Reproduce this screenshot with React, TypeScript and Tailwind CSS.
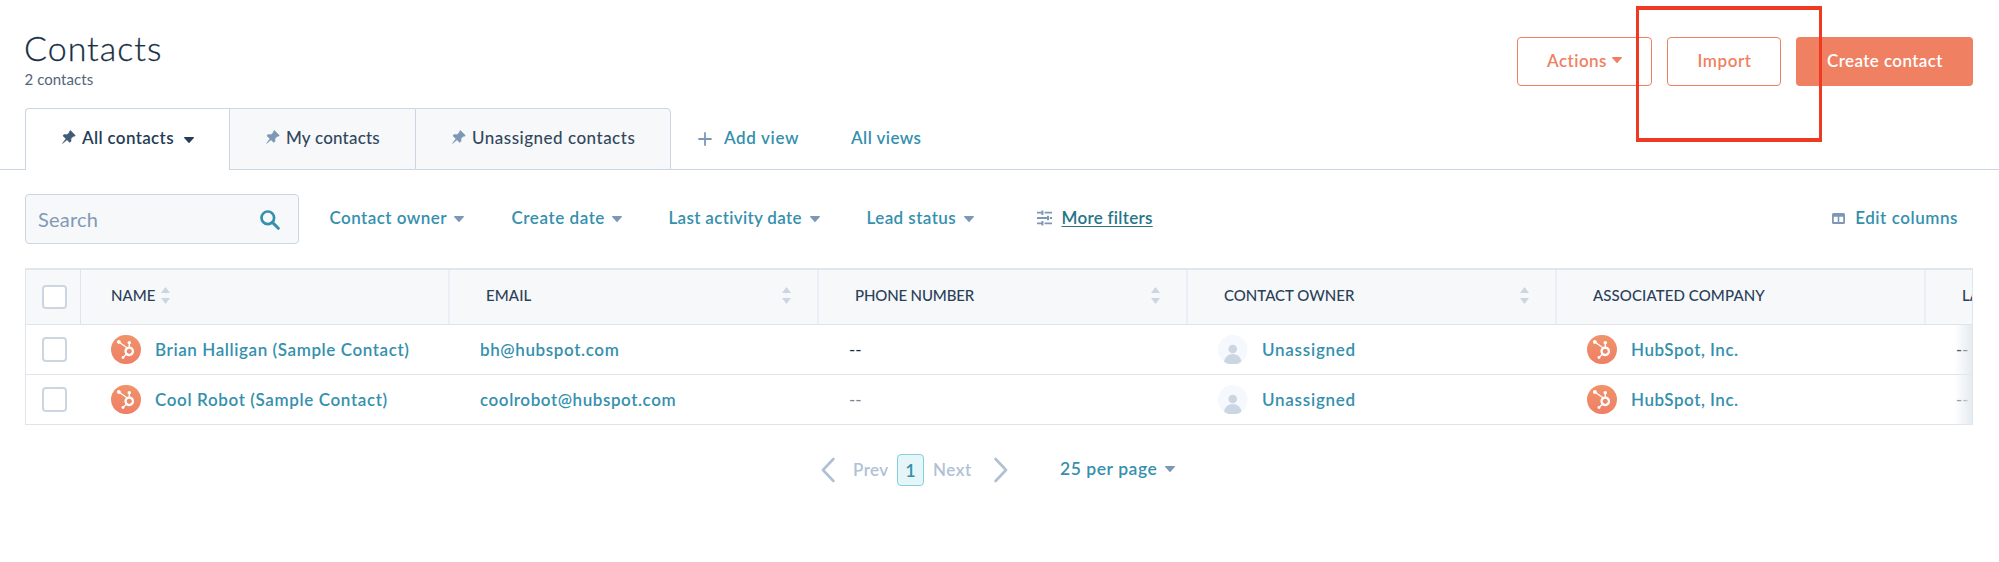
import type { ReactNode } from "react";
import { FaHubspot } from "react-icons/fa";

function Caret({ className = "" }: { className?: string }) {
  return (
    <svg viewBox="0 0 10 6" className={`h-[6px] w-[10px] shrink-0 ${className}`} fill="currentColor">
      <path d="M.6 0h8.8c.5 0 .7.5.4.9L5.5 5.7a.7.7 0 0 1-1 0L.2.9C-.1.5.1 0 .6 0z" />
    </svg>
  );
}

function PinIcon({ className = "" }: { className?: string }) {
  return (
    <svg viewBox="0 0 14 14" className={`mt-[-3px] mr-[6px] size-[14px] shrink-0 ${className}`} fill="currentColor" stroke="currentColor" strokeWidth=".6" strokeLinejoin="round">
      <path d="M8.4.5 13.3 5.4 12.3 6.3 11.3 6.2 8.9 8.7 9 11.2 7.8 12.4 5 9.7.6 13.4 4 8.7.9 5.7 2.2 4.6 5 4.7 7.6 2.3 7.4 1.4z" />
    </svg>
  );
}

function SortArrows({ className = "" }: { className?: string }) {
  return (
    <svg viewBox="0 0 9 17" className={`h-[17px] w-[9px] shrink-0 text-[#cbd6e2] ${className}`} fill="currentColor">
      <path d="M4.5 0 9 6H0zM4.5 17 9 11H0z" />
    </svg>
  );
}

function SearchIcon() {
  return (
    <svg viewBox="0 0 20 20" className="mb-[-1px] h-[20px] w-[20px] shrink-0 text-[#3590ae]" fill="none" stroke="currentColor">
      <circle cx="7.8" cy="7.8" r="6.3" strokeWidth="2.7" />
      <path d="m12.4 12.4 5.9 5.9" strokeWidth="3" strokeLinecap="round" />
    </svg>
  );
}

function SlidersIcon() {
  return (
    <svg viewBox="0 0 15 16" className="h-[16px] w-[15px] shrink-0 text-[#7c98b6]" stroke="currentColor" fill="none" strokeWidth="1.8">
      <path d="M0 2.7h5.4M7.6 2.7H15M0 8h10.8M12.8 8H15M0 13.3h5.4M7.6 13.3H15" />
      <path d="M5.4.4v4.6M11 5.7v4.6M5.4 11v4.6" strokeWidth="2" />
    </svg>
  );
}

function ColumnsIcon() {
  return (
    <svg viewBox="0 0 13 11" className="h-[11px] w-[13px] shrink-0 text-[#7c98b6]">
      <path
        fill="currentColor"
        fillRule="evenodd"
        d="M1.5 0h10A1.5 1.5 0 0 1 13 1.5v8A1.5 1.5 0 0 1 11.5 11h-10A1.5 1.5 0 0 1 0 9.5v-8A1.5 1.5 0 0 1 1.5 0zM1.8 3.7v5.2h3.900V3.7zM7.3 3.7v5.2h3.900V3.7z"
      />
    </svg>
  );
}

function LogoAvatar() {
  return (
    <span className="flex size-[29.5px] shrink-0 items-center justify-center rounded-full bg-linear-to-b from-[#f0936a] to-[#ef7f66] text-white">
      <FaHubspot className="size-[19px]" />
    </span>
  );
}

function PersonAvatar() {
  return (
    <svg viewBox="0 0 30 30" className="size-[29.5px] shrink-0">
      <circle cx="15" cy="15" r="15" fill="#f5f8fc" />
      <circle cx="15" cy="14.2" r="4.4" fill="#cbd6e2" />
      <path d="M6.2 27.1c.6-4.7 4.3-7.7 8.8-7.7s8.2 3 8.8 7.7A15 15 0 0 1 15 30a15 15 0 0 1-8.8-2.9z" fill="#cbd6e2" />
    </svg>
  );
}

function Checkbox() {
  return <span className="block size-[24.5px] shrink-0 rounded-[4px] border-2 border-[#cbd6e2] bg-white" />;
}

function Filter({ label, className }: { label: string; className: string }) {
  return (
    <div className={`flex shrink-0 items-center justify-between text-[#3590ae] ${className}`}>
      <span>{label}</span>
      <Caret className="mt-[2px] text-[#7c98b6]" />
    </div>
  );
}

function HeadCell({ children, className = "" }: { children: ReactNode; className?: string }) {
  return (
    <div className={`flex w-[369px] shrink-0 items-center border-l-2 border-[#eaeef5] pb-[4px] pl-[36px] ${className}`}>
      {children}
    </div>
  );
}

type Contact = {
  name: string;
  email: string;
  nameClass: string;
  emailClass: string;
  dashClass: string;
};

const contacts: Contact[] = [
  {
    name: "Brian Halligan (Sample Contact)",
    email: "bh@hubspot.com",
    nameClass: "tracking-[0.59px]",
    emailClass: "tracking-[0.62px]",
    dashClass: "text-[#1c2f45]",
  },
  {
    name: "Cool Robot (Sample Contact)",
    email: "coolrobot@hubspot.com",
    nameClass: "tracking-[0.63px]",
    emailClass: "tracking-[0.57px]",
    dashClass: "text-[#7b8591]",
  },
];

function Row({ contact }: { contact: Contact }) {
  return (
    <div className="flex h-[50px] items-center border-b border-[#dfe3eb] font-semibold text-[#3590ae]">
      <div className="w-[85px] shrink-0 pl-[16px]">
        <Checkbox />
      </div>
      <div className="flex w-[369px] shrink-0 items-center gap-[14.5px]">
        <LogoAvatar />
        <span className={contact.nameClass}>{contact.name}</span>
      </div>
      <span className={`w-[369px] shrink-0 ${contact.emailClass}`}>{contact.email}</span>
      <span className={`w-[369px] shrink-0 font-normal ${contact.dashClass}`}>--</span>
      <div className="flex w-[369px] shrink-0 items-center gap-[14.5px]">
        <PersonAvatar />
        <span className="tracking-[0.74px]">Unassigned</span>
      </div>
      <div className="flex w-[369px] shrink-0 items-center gap-[14.5px]">
        <LogoAvatar />
        <span className="tracking-[0.52px]">HubSpot, Inc.</span>
      </div>
      <span className={`shrink-0 font-normal ${contact.dashClass}`}>--</span>
    </div>
  );
}

export default function App() {
  return (
    <div className="relative flex h-[562px] w-[1999px] flex-col overflow-hidden bg-white font-['Lato',sans-serif] text-[17px] leading-[24px] font-medium whitespace-nowrap text-[#33475b]">
      <header className="flex h-[108px] shrink-0 items-start justify-between pr-[26px] pl-[24px]">
        <div className="pt-[28px]">
          <h1 className="text-[34px] leading-[40px] font-light tracking-[1px] text-[#15293f] [-webkit-text-stroke:0.3px_#2d4259]">
            Contacts
          </h1>
          <p className="mt-[1px] pl-[0.5px] text-[15px] leading-[20px] font-normal tracking-[0.05px] text-[#52657a]">2 contacts</p>
        </div>
        <div className="flex gap-[15px] pt-[37px] font-semibold text-[#f08062]">
          <button className="flex h-[49px] w-[135px] items-center justify-center gap-[5px] rounded-[4px] border border-[#f08062] pb-[2px]">
            <span className="tracking-[0.45px]">Actions</span>
            <Caret className="mb-[1px]" />
          </button>
          <button className="h-[49px] w-[114px] rounded-[4px] border border-[#f08062] pb-[2px] pl-[1px] tracking-[0.55px]">
            Import
          </button>
          <button className="h-[49px] w-[177px] rounded-[4px] bg-[#f08062] pb-[2px] pl-[1px] tracking-[0.4px] text-white">
            Create contact
          </button>
        </div>
      </header>

      <nav className="flex h-[62px] shrink-0">
        <div className="w-[25px] border-b border-[#cbd6e2]" />
        <div className="flex w-[204px] items-center rounded-tl-[4px] border-t border-l border-[#cbd6e2] pb-[3px] pl-[36px] font-semibold text-[#253d55]">
          <PinIcon className="text-[#425b76]" />
          <span className="tracking-[0.34px]">All contacts</span>
          <Caret className="mt-[3px] ml-[10px]" />
        </div>
        <div className="flex w-[186px] items-center border-t border-b border-l border-[#cbd6e2] bg-[#f6f8fa] pb-[2px] pl-[36px]">
          <PinIcon className="text-[#7c98b6]" />
          <span className="tracking-[0.2px]">My contacts</span>
        </div>
        <div className="flex w-[256px] items-center rounded-tr-[4px] border border-[#cbd6e2] bg-[#f6f8fa] pb-[2px] pl-[36px]">
          <PinIcon className="text-[#7c98b6]" />
          <span className="tracking-[0.5px]">Unassigned contacts</span>
        </div>
        <div className="flex flex-1 items-center border-b border-[#cbd6e2] pb-[1px] pl-[27px] font-semibold text-[#3590ae]">
          <svg viewBox="0 0 14 14" className="mt-[2px] mr-[12px] size-[14px] text-[#7c98b6]" stroke="currentColor" strokeWidth="1.8" strokeLinecap="round">
            <path d="M7 1v12M1 7h12" />
          </svg>
          <span className="w-[127px] tracking-[0.64px]">Add view</span>
          <span className="tracking-[0.43px]">All views</span>
        </div>
      </nav>

      <div className="flex h-[98px] shrink-0 items-start pt-[24px] pl-[25px]">
        <div className="flex h-[50px] w-[274px] shrink-0 items-center justify-between rounded-[4px] border border-[#cbd6e2] bg-[#f6f8fa] pr-[18px] pl-[12px]">
          <span className="text-[20px] font-normal tracking-[0.2px] text-[#8299b6]">Search</span>
          <SearchIcon />
        </div>
        <div className="flex h-[48px] flex-1 items-center pl-[30.5px] font-semibold">
          <Filter label="Contact owner" className="mr-[48px] w-[134px] tracking-[0.45px]" />
          <Filter label="Create date" className="mr-[47px] w-[110px] tracking-[0.56px]" />
          <Filter label="Last activity date" className="mr-[47px] w-[151px] tracking-[0.32px]" />
          <Filter label="Lead status" className="mr-[63.5px] w-[107px] tracking-[0.43px]" />
          <SlidersIcon />
          <span className="ml-[9.5px] tracking-[0.28px] text-[#257487] underline decoration-1 underline-offset-[2px]">
            More filters
          </span>
          <div className="ml-auto flex items-center gap-[10.5px] pr-[41px] text-[#3590ae]">
            <ColumnsIcon />
            <span className="tracking-[0.56px]">Edit columns</span>
          </div>
        </div>
      </div>

      <main className="relative ml-[25px] h-[157px] w-[1948px] shrink-0 overflow-hidden border-t-2 border-r border-l border-[#e1e5ed]">
        <div className="flex h-[55px] border-b border-[#dfe3eb] bg-[#f6f8fa] text-[15px] text-[#2b4058]">
          <div className="flex w-[55px] shrink-0 items-center border-r border-[#dfe3eb] pl-[16px]">
            <Checkbox />
          </div>
          <div className="flex w-[367px] shrink-0 items-center gap-[6px] pb-[4px] pl-[30px]">
            <span>NAME</span>
            <SortArrows className="mt-[1px]" />
          </div>
          <HeadCell className="justify-between pr-[26px]">
            <span className="tracking-[0.1px]">EMAIL</span>
            <SortArrows className="mt-[1px]" />
          </HeadCell>
          <HeadCell className="justify-between pr-[26px]">
            <span className="tracking-[-0.15px]">PHONE NUMBER</span>
            <SortArrows className="mt-[1px]" />
          </HeadCell>
          <HeadCell className="justify-between pr-[26px]">
            <span>CONTACT OWNER</span>
            <SortArrows className="mt-[1px]" />
          </HeadCell>
          <HeadCell>
            <span className="tracking-[0.1px]">ASSOCIATED COMPANY</span>
          </HeadCell>
          <HeadCell>
            <span>LA</span>
          </HeadCell>
        </div>
        {contacts.map((contact) => (
          <Row key={contact.name} contact={contact} />
        ))}
        <div className="absolute top-[55px] right-0 bottom-0 w-[18px] bg-linear-to-r from-[#e3e9ef]/0 to-[#e3e9ef]/90" />
      </main>

      <footer className="flex h-[88px] items-center pl-[820.5px] font-semibold text-[#b0c1d4]">
        <svg viewBox="0 0 14 26" className="mt-[1px] h-[26px] w-[14px]" fill="none" stroke="currentColor" strokeWidth="2.6" strokeLinecap="round" strokeLinejoin="round">
          <path d="M12.4 2 2 13l10.4 11" />
        </svg>
        <span className="ml-[18.5px] w-[44px] pt-[1px] tracking-[0.4px]">Prev</span>
        <span className="mt-[2px] flex h-[32px] w-[27px] items-center justify-center rounded-[4px] border border-[#7fd1de] bg-[#e5f5f8] pb-[1px] text-[18px] text-[#3590ae]">
          1
        </span>
        <span className="ml-[9px] w-[61px] pt-[1px] tracking-[0.55px]">Next</span>
        <svg viewBox="0 0 14 26" className="mt-[1px] h-[26px] w-[14px]" fill="none" stroke="currentColor" strokeWidth="2.6" strokeLinecap="round" strokeLinejoin="round">
          <path d="M1.6 2 12 13 1.6 24" />
        </svg>
        <span className="ml-[52px] pb-[1px] text-[17.5px] tracking-[0.55px] text-[#3590ae]">25 per page</span>
        <Caret className="ml-[7.5px] text-[#7c98b6]" />
      </footer>

      <div className="absolute top-[6px] left-[1636px] h-[136px] w-[186px] border-3 border-y-4 border-[#ee3a20]" />
    </div>
  );
}
